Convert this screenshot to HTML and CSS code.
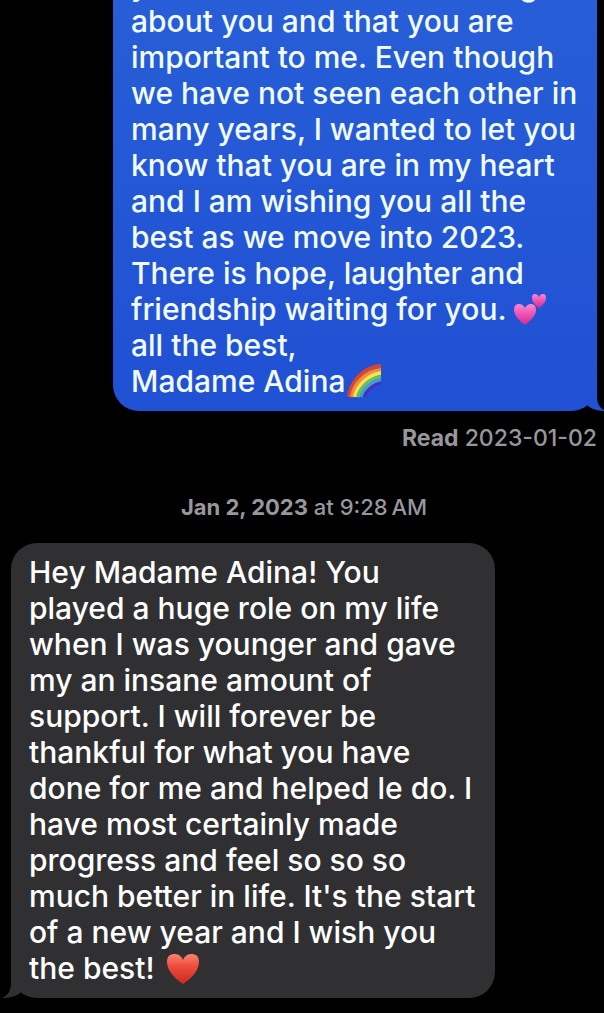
FILE: index.html
```
<!DOCTYPE html>
<html lang="en">

<head>
  <meta charset="UTF-8">
  <meta name="viewport" content="width=device-width, initial-scale=1.0">
  <title>Messages</title>
  <link rel="stylesheet" href="styles.css">
</head>

<body>
  <main class="chat">
    <div class="bubble sent">
      <p>
        you know that I was thinking<br>
        about you and that you are<br>
        important to me. Even though<br>
        we have not seen each other in<br>
        many years, I wanted to let you<br>
        know that you are in my heart<br>
        and I am wishing you all the<br>
        best as we move into 2023.<br>
        There is hope, laughter and<br>
        friendship waiting for you.
        <svg class="emoji" viewBox="0 0 32 32" role="img" aria-label="two hearts">
          <defs>
            <linearGradient id="pink" x1="0" y1="0" x2="0" y2="1">
              <stop offset="0" stop-color="#f98bd0"/>
              <stop offset="0.45" stop-color="#ee55b4"/>
              <stop offset="1" stop-color="#d32a92"/>
            </linearGradient>
          </defs>
          <path fill="url(#pink)" d="M11 31C7 28 0 22 0 16C0 12 2 10 5 10C8 10 10 12 11 14C12 12 14 10 17 10C20 10 22 12 22 16C22 22 15 28 11 31Z"/>
          <path fill="url(#pink)" d="M25 14C22 12 18 8 18 4C18 1 19 0 21 0C23 0 24 1 25 3C26 1 27 0 29 0C31 0 32 1 32 4C32 8 28 12 25 14Z"/>
        </svg><br>
        all the best,<br>
        Madame Adina<svg class="emoji rainbow" viewBox="0 0 34 34" role="img" aria-label="rainbow">
          <g fill="none" stroke-width="4">
            <path stroke="#d9452f" d="M2 33C4 17 17 3 34 2"/>
            <path stroke="#f08f35" d="M5 33C7 20 19 7 34 6"/>
            <path stroke="#f8e25a" d="M8 33C10 22 21 11 34 9"/>
            <path stroke="#6cbf55" d="M11 33C13 24 23 14 34 13"/>
            <path stroke="#3d9be0" d="M14 33C16 26 25 17 34 16"/>
            <path stroke="#4a2fb8" stroke-width="3" d="M17 33C19 27 26 20 34 19"/>
          </g>
        </svg>
      </p>
      <svg class="tail" viewBox="0 0 28 28" aria-hidden="true">
        <path d="M10 0H17V12C17 20 19 25 26 28C18 28 11 26 7 22C5 20 7 8 10 0Z"/>
      </svg>
    </div>
    <p class="receipt"><b>Read</b> 2023-01-02</p>

    <p class="timestamp"><b>Jan 2, 2023</b> at 9:28&#8239;AM</p>

    <div class="bubble received">
      <p>
        Hey Madame Adina! You<br>
        played a huge role on my life<br>
        when I was younger and gave<br>
        my an insane amount of<br>
        support. I will forever be<br>
        thankful for what you have<br>
        done for me and helped le do. I<br>
        have most certainly made<br>
        progress and feel so so so<br>
        much better in life. It's the start<br>
        of a new year and I wish you<br>
        the best!
        <svg class="emoji heart" viewBox="0 0 32 32" role="img" aria-label="red heart">
          <defs>
            <linearGradient id="red" x1="0" y1="0" x2="0" y2="1">
              <stop offset="0" stop-color="#fb8471"/>
              <stop offset="0.4" stop-color="#ee4c3c"/>
              <stop offset="1" stop-color="#cc2a22"/>
            </linearGradient>
          </defs>
          <path fill="url(#red)" d="M16 31C10 27 0 19 0 9C0 3 3 1 8 1C12 1 15 4 16 7C17 4 20 1 24 1C29 1 32 3 32 9C32 19 22 27 16 31Z"/>
        </svg>
      </p>
      <svg class="tail" viewBox="0 0 28 28" aria-hidden="true">
        <path d="M10 0H17V12C17 20 19 25 26 28C18 28 11 26 7 22C5 20 7 8 10 0Z"/>
      </svg>
    </div>
  </main>
</body>

</html>
```
FILE: styles.css
```
body {
  margin: 0;
  background: #000;
  font-family: Inter, "Liberation Sans", sans-serif;
}

p {
  margin: 0;
}

/* newest message sits at the bottom, older ones run off the top */
.chat {
  display: flex;
  flex-direction: column;
  justify-content: flex-end;
  box-sizing: border-box;
  height: 100vh;
  padding: 0 7px 15px 11px;
  overflow: hidden;
}

.bubble {
  position: relative;
  box-sizing: border-box;
  flex-shrink: 0;
  width: 484px;
  max-width: 90%;
  padding: 11px 18px 12px;
  border-radius: 26px;
  color: #fff;
  font-size: 30px;
  font-weight: 500;
  line-height: 36px;
  white-space: nowrap;
}

.sent {
  align-self: flex-end;
  background: linear-gradient(#285fd7, #2050d4);
  color: #f0fbff;
}

.received {
  align-self: flex-start;
  background: #303032;
}

.tail {
  position: absolute;
  bottom: 0;
  width: 28px;
  height: 28px;
}

.sent .tail {
  right: -11px;
  fill: #2050d4;
}

.received .tail {
  left: -11px;
  fill: #303032;
  transform: scaleX(-1);
}

.emoji {
  width: 32px;
  height: 32px;
  margin: -8px 0 -4px;
  vertical-align: -2px;
}

.rainbow {
  width: 34px;
  height: 34px;
  margin-left: 2px;
}

.heart {
  margin-left: 4px;
}

.receipt,
.timestamp {
  color: #97979c;
  font-weight: 500;
  line-height: 26px;
}

.receipt {
  align-self: flex-end;
  margin-top: 14px;
  font-size: 23px;
}

.timestamp {
  margin: 43px 0 23px;
  font-size: 22px;
  text-align: center;
}
```
